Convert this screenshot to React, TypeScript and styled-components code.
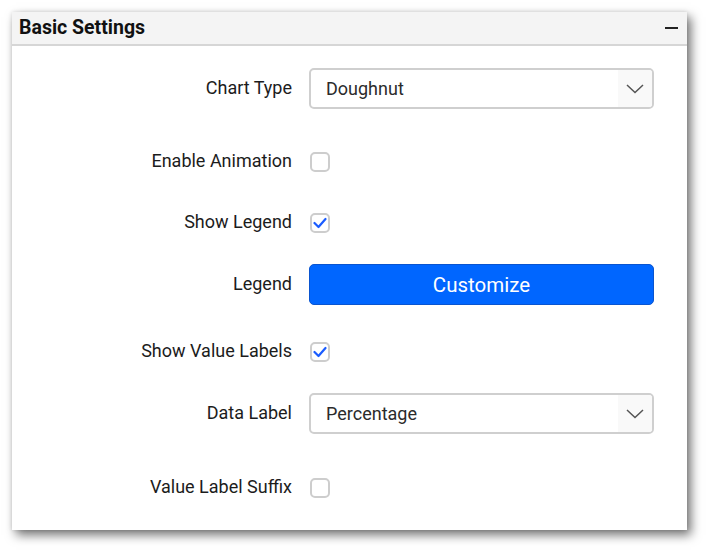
import { FC } from 'react';
import styled, { createGlobalStyle } from 'styled-components';

const GlobalStyle = createGlobalStyle`
    html, body {
        margin: 0;
        padding: 0;
        background: #ffffff;
        font-family: Roboto, "Liberation Sans", sans-serif;
    }
`;

const Page = styled.div`
    padding: 12px 20px 20px 12px;
    width: 707px;
    height: 550px;
    box-sizing: border-box;
`;

const Panel = styled.section`
    width: 675px;
    height: 518px;
    background: #ffffff;
    box-shadow: 4px 5px 10px rgba(0, 0, 0, 0.55), 0 0 4px rgba(0, 0, 0, 0.12);
    display: flex;
    flex-direction: column;
`;

const Header = styled.header`
    height: 31px;
    background: #f4f4f4;
    border-bottom: 2px solid #d6d6d6;
    display: flex;
    align-items: center;
    justify-content: space-between;
    padding: 0 8px 1px 7px;
`;

const Title = styled.h3`
    margin: 0;
    font-size: 19.5px;
    font-weight: 700;
    color: #111;
`;

const Collapse = styled.span`
    width: 13px;
    height: 2px;
    background: #222;
    margin-right: 1px;
`;

const Body = styled.div`
    display: flex;
    flex-direction: column;
    padding-top: 22px;
`;

const Row = styled.div<{ $top: number }>`
    display: grid;
    grid-template-columns: 280px 345px;
    column-gap: 17px;
    align-items: center;
    height: 41px;
    margin-top: ${p => p.$top}px;
`;

const Label = styled.label`
    text-align: right;
    font-size: 18px;
    color: #1c1c1c;
    margin-bottom: 3px;
`;

const Select = styled.div`
    height: 41px;
    box-sizing: border-box;
    border: 2px solid #cfcfcf;
    border-radius: 5px;
    display: flex;
    align-items: stretch;
    overflow: hidden;
`;

const SelectValue = styled.span`
    flex: 1;
    display: flex;
    align-items: center;
    padding-left: 15px;
    font-size: 18px;
    color: #2b2b2b;
`;

const SelectArrow = styled.span`
    width: 34px;
    background: #f9f9f9;
    display: flex;
    align-items: center;
    justify-content: center;
`;

const Box = styled.span`
    width: 20px;
    height: 20px;
    box-sizing: border-box;
    border: 2px solid #cdcdcd;
    border-radius: 5px;
    display: flex;
    align-items: center;
    justify-content: center;
    margin-left: 1px;
`;

const Button = styled.button`
    height: 41px;
    border: 1px solid #0a55d0;
    border-radius: 5px;
    background: #0066ff;
    color: #ffffff;
    font-family: Roboto, "Liberation Sans", sans-serif;
    font-size: 20.5px;
    cursor: pointer;
`;

const Chevron: FC = () => (
    <svg width="18" height="10" viewBox="0 0 18 10" fill="none">
        <path d="M1 1 L9 8.5 L17 1" stroke="#555" strokeWidth="1.5" />
    </svg>
);

const Check: FC = () => (
    <svg width="14" height="12" viewBox="0 0 14 12" fill="none">
        <path d="M1.5 6 L5.5 10 L12.5 2" stroke="#1a5cff" strokeWidth="2.2" strokeLinecap="round" strokeLinejoin="round" />
    </svg>
);

const Dropdown: FC<{ value: string }> = ({ value }) => (
    <Select>
        <SelectValue>{value}</SelectValue>
        <SelectArrow><Chevron /></SelectArrow>
    </Select>
);

const Checkbox: FC<{ checked?: boolean }> = ({ checked }) => (
    <div><Box>{checked && <Check />}</Box></div>
);

const App: FC = () => (
    <Page>
        <GlobalStyle />
        <Panel>
            <Header>
                <Title>Basic Settings</Title>
                <Collapse />
            </Header>
            <Body>
                <Row $top={0}>
                    <Label>Chart Type</Label>
                    <Dropdown value={'Doughnut'} />
                </Row>
                <Row $top={32}>
                    <Label>Enable Animation</Label>
                    <Checkbox />
                </Row>
                <Row $top={20}>
                    <Label>Show Legend</Label>
                    <Checkbox checked={true} />
                </Row>
                <Row $top={21}>
                    <Label>Legend</Label>
                    <Button>Customize</Button>
                </Row>
                <Row $top={26}>
                    <Label>Show Value Labels</Label>
                    <Checkbox checked={true} />
                </Row>
                <Row $top={21}>
                    <Label>Data Label</Label>
                    <Dropdown value={'Percentage'} />
                </Row>
                <Row $top={33}>
                    <Label>Value Label Suffix</Label>
                    <Checkbox />
                </Row>
            </Body>
        </Panel>
    </Page>
);

export default App;
